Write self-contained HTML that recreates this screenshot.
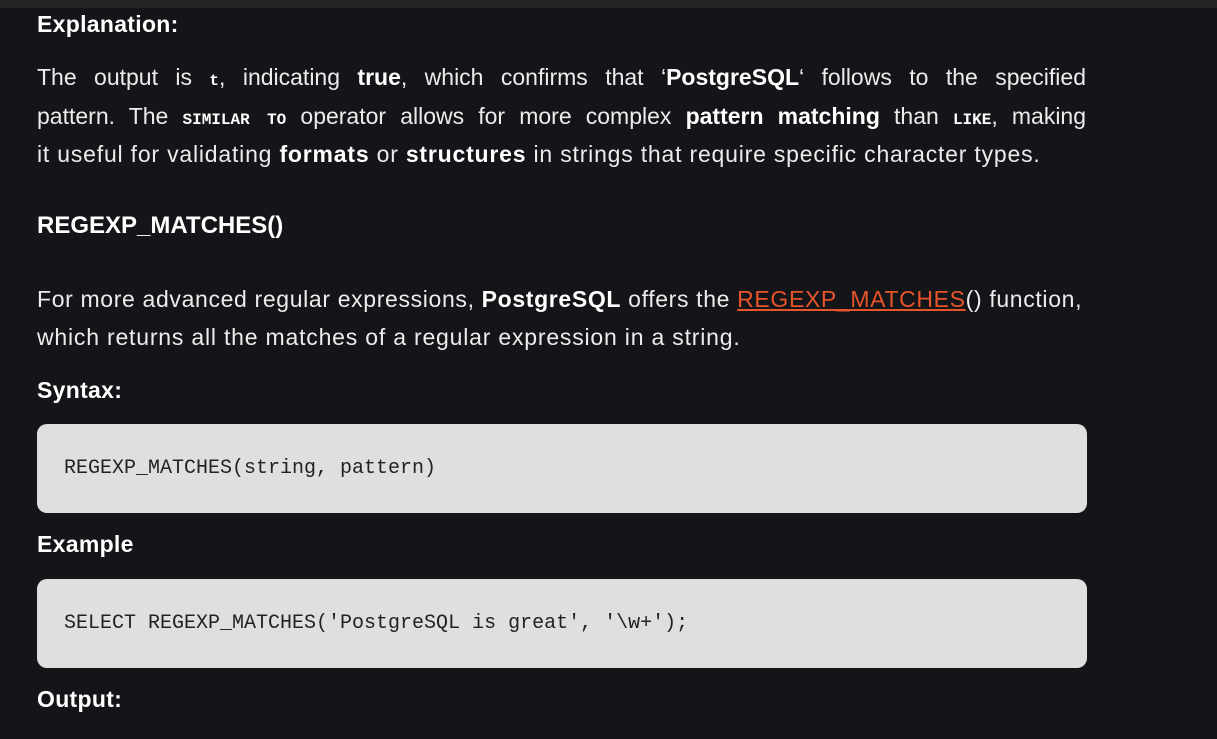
<!DOCTYPE html>
<html><head><meta charset="utf-8"><style>
html,body{margin:0;padding:0;width:1217px;height:739px;overflow:hidden;background:#141518;font-family:"Liberation Sans",sans-serif;color:#ececec}
.top{position:absolute;left:0;top:0;width:1217px;height:8px;background:#252525}
.t{position:absolute;left:37px;font-size:23px;letter-spacing:0.8px;white-space:nowrap}
.j{width:1049px;text-align:justify;text-align-last:justify;letter-spacing:0}
b{font-weight:bold;color:#fff}
.h{position:absolute;left:37px;font-weight:bold;color:#fff;font-size:23px;letter-spacing:0.3px}
code.i{font-family:"Liberation Mono",monospace;font-weight:bold;font-size:16px;color:#fff;letter-spacing:0}
a{color:#e8542a;text-decoration:underline}
.box{position:absolute;left:37px;width:1050px;height:89px;background:#dfdfdf;border-radius:10px}
.box span{position:absolute;left:27px;top:33px;font-family:"Liberation Mono",monospace;font-size:20px;color:#222}
</style></head><body>
<div class="top"></div>
<div class="h" style="top:11px">Explanation:</div>
<div class="t j" style="top:64px">The output is <code class="i">t</code>, indicating <b>true</b>, which confirms that ‘<b>PostgreSQL</b>‘ follows to the specified</div>
<div class="t j" style="top:103px">pattern. The <code class="i">SIMILAR TO</code> operator allows for more complex <b>pattern matching</b> than <code class="i">LIKE</code>, making</div>
<div class="t" style="top:141px">it useful for validating <b>formats</b> or <b>structures</b> in strings that require specific character types.</div>
<div class="h" style="top:212px;font-size:24px;letter-spacing:0">REGEXP_MATCHES()</div>
<div class="t" style="top:286px;letter-spacing:0.65px">For more advanced regular expressions, <b>PostgreSQL</b> offers the <a>REGEXP_MATCHES</a>() function,</div>
<div class="t" style="top:324px">which returns all the matches of a regular expression in a string.</div>
<div class="h" style="top:377px">Syntax:</div>
<div class="box" style="top:424px"><span>REGEXP_MATCHES(string, pattern)</span></div>
<div class="h" style="top:531px">Example</div>
<div class="box" style="top:579px"><span>SELECT REGEXP_MATCHES('PostgreSQL is great', '\w+');</span></div>
<div class="h" style="top:686px">Output:</div>
</body></html>
